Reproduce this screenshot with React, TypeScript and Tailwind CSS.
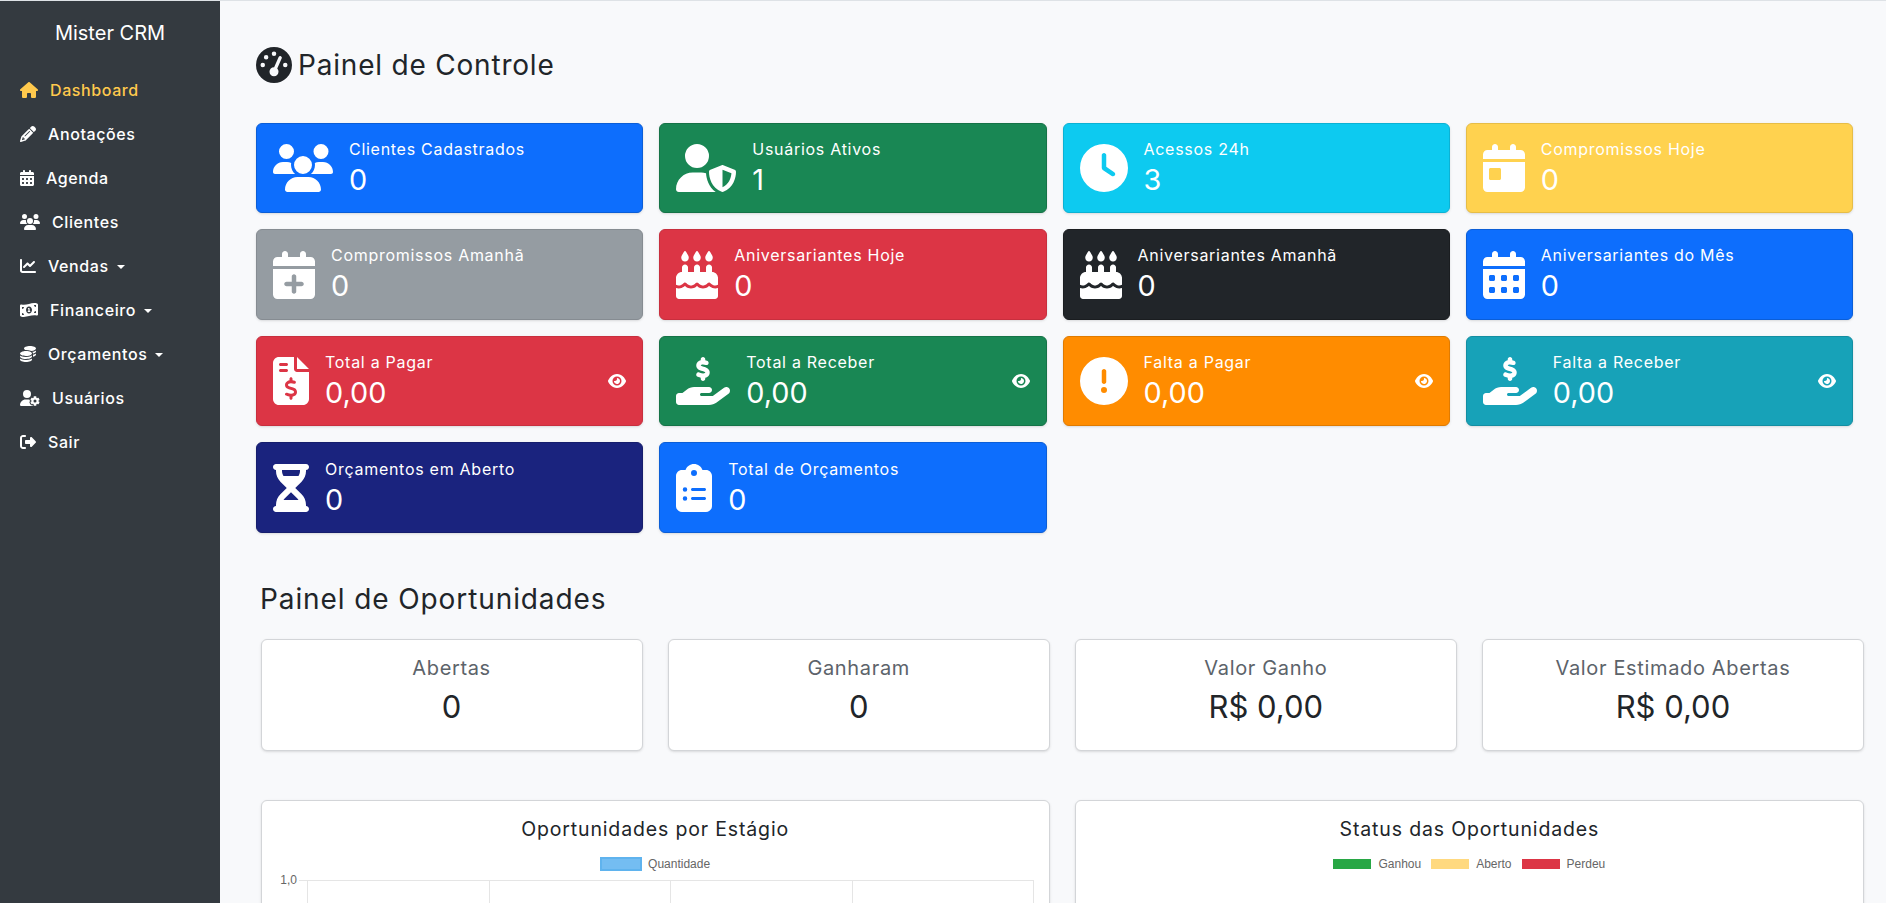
import type { ReactNode } from 'react'
import {
  FaHouse, FaPencil, FaCalendarDays, FaUsers, FaChartLine, FaMoneyBill1Wave, FaCoins, FaUserGear, FaRightFromBracket,
  FaGaugeHigh, FaUserShield, FaClock, FaCalendarDay, FaCalendarPlus, FaCakeCandles, FaFileInvoiceDollar,
  FaHandHoldingDollar, FaCircleExclamation, FaHourglassHalf, FaClipboardList, FaEye,
} from 'react-icons/fa6'

const MENU = [
  { label: 'Dashboard', icon: FaHouse, width: 'w-[18px]', active: true },
  { label: 'Anotações', icon: FaPencil, width: 'w-4' },
  { label: 'Agenda', icon: FaCalendarDays, width: 'w-[14px]' },
  { label: 'Clientes', icon: FaUsers, width: 'w-5' },
  { label: 'Vendas', icon: FaChartLine, width: 'w-4', caret: true },
  { label: 'Financeiro', icon: FaMoneyBill1Wave, width: 'w-[18px]', caret: true },
  { label: 'Orçamentos', icon: FaCoins, width: 'w-4', caret: true },
  { label: 'Usuários', icon: FaUserGear, width: 'w-5' },
  { label: 'Sair', icon: FaRightFromBracket, width: 'w-4' },
]

const STATS = [
  { title: 'Clientes Cadastrados', value: '0', icon: FaUsers, width: 'w-[60px]', color: 'bg-[#0d6efd] border-[#0b5ed7]' },
  { title: 'Usuários Ativos', value: '1', icon: FaUserShield, width: 'w-[60px]', color: 'bg-[#198754] border-[#157347]' },
  { title: 'Acessos 24h', value: '3', icon: FaClock, width: 'w-12', color: 'bg-[#0dcaf0] border-[#0bb2d4]' },
  { title: 'Compromissos Hoje', value: '0', icon: FaCalendarDay, width: 'w-[42px]', color: 'bg-[#ffd24f] border-[#e6bd47]' },
  { title: 'Compromissos Amanhã', value: '0', icon: FaCalendarPlus, width: 'w-[42px]', color: 'bg-[#959ca2] border-[#868c92]' },
  { title: 'Aniversariantes Hoje', value: '0', icon: FaCakeCandles, width: 'w-[42px]', color: 'bg-[#dc3545] border-[#c82f3e]' },
  { title: 'Aniversariantes Amanhã', value: '0', icon: FaCakeCandles, width: 'w-[42px]', color: 'bg-[#212529] border-[#1a1d20]' },
  { title: 'Aniversariantes do Mês', value: '0', icon: FaCalendarDays, width: 'w-[42px]', color: 'bg-[#0d6efd] border-[#0b5ed7]' },
  { title: 'Total a Pagar', value: '0,00', icon: FaFileInvoiceDollar, width: 'w-9', color: 'bg-[#dc3545] border-[#c82f3e]', eye: true },
  { title: 'Total a Receber', value: '0,00', icon: FaHandHoldingDollar, width: 'w-[54px]', color: 'bg-[#198754] border-[#157347]', eye: true },
  { title: 'Falta a Pagar', value: '0,00', icon: FaCircleExclamation, width: 'w-12', color: 'bg-[#ff8c00] border-[#e07b00]', eye: true },
  { title: 'Falta a Receber', value: '0,00', icon: FaHandHoldingDollar, width: 'w-[54px]', color: 'bg-[#17a2b8] border-[#138ea2]', eye: true },
  { title: 'Orçamentos em Aberto', value: '0', icon: FaHourglassHalf, width: 'w-9', color: 'bg-[#1a237e] border-[#161e6d]' },
  { title: 'Total de Orçamentos', value: '0', icon: FaClipboardList, width: 'w-9', color: 'bg-[#0d6efd] border-[#0b5ed7]' },
]

const OPPORTUNITIES = [
  { title: 'Abertas', value: '0' },
  { title: 'Ganharam', value: '0' },
  { title: 'Valor Ganho', value: 'R$ 0,00' },
  { title: 'Valor Estimado Abertas', value: 'R$ 0,00' },
]

function ChartCard({ title, children }: { title: string; children: ReactNode }) {
  return (
    <div className="h-[200px] rounded-md border border-[#d3d5d8] bg-white shadow-sm">
      <h5 className="pt-[14px] text-center text-[19.5px] leading-[28px] tracking-[0.85px] text-[#212529]">{title}</h5>
      {children}
    </div>
  )
}

export default function App() {
  return (
    <div className="flex h-screen overflow-hidden border-t border-[#dee2e6] bg-[#f8f9fb] font-['Inter',sans-serif]">
      {/* Sidebar */}
      <aside className="w-[220px] shrink-0 bg-[#343a40] text-white">
        <div className="pt-[18px] text-center text-[20px] leading-[28px]">Mister CRM</div>
        <nav className="mt-[21px] flex flex-col">
          {MENU.map(item => (
            <a key={item.label} className={`flex h-[44px] items-center gap-3 pl-5 text-[16px] font-medium tracking-[0.6px] ${item.active ? 'text-[#ffc94d]' : 'text-white'}`}>
              <item.icon className={`h-4 shrink-0 ${item.width}`} />
              <span>{item.label}</span>
              {item.caret && <span className="ml-[-4px] mt-[2px] border-x-[4px] border-t-[4px] border-x-transparent border-t-current" />}
            </a>
          ))}
        </nav>
      </aside>

      {/* Main */}
      <main className="min-w-0 flex-1 pl-[36px] pr-[33px]">
        <h3 className="mt-[46px] flex h-[36px] items-center gap-[6px] text-[28px] tracking-[0.8px] text-[#212529]">
          <FaGaugeHigh className="h-[36px] w-[36px]" />
          Painel de Controle
        </h3>

        <div className="mt-[39.7px] grid grid-cols-4 gap-4">
          {STATS.map(stat => (
            <div key={stat.title} className={`flex h-[90.6px] items-center gap-4 rounded-md border px-[16px] text-white shadow-sm ${stat.color}`}>
              <stat.icon className={`h-12 shrink-0 ${stat.width}`} />
              <div className="min-w-0 flex-1">
                <div className="mb-[4px] text-[16px] leading-[20px] tracking-[0.72px]">{stat.title}</div>
                <div className="text-[28.8px] leading-[34.5px]">{stat.value}</div>
              </div>
              {stat.eye && <FaEye className="h-4 w-[18px] shrink-0" />}
            </div>
          ))}
        </div>

        <div className="ml-[4.5px] mr-[-11px]">
          <h3 className="ml-[-0.5px] mt-[42.4px] text-[28px] leading-[48px] tracking-[0.9px] text-[#212529]">Painel de Oportunidades</h3>
          <div className="mt-[16px] grid grid-cols-4 gap-[25px]">
            {OPPORTUNITIES.map(o => (
              <div key={o.title} className="h-[112px] rounded-md border border-[#d3d5d8] bg-white pt-[16px] text-center shadow-sm">
                <div className="text-[20px] leading-[24px] tracking-[0.65px] text-[#5c636a]">{o.title}</div>
                <div className="mt-[8px] text-[31px] leading-[38px] text-[#212529]">{o.value}</div>
              </div>
            ))}
          </div>

          <div className="mt-[49px] grid grid-cols-2 gap-[25px]">
            <ChartCard title="Oportunidades por Estágio">
              <div className="mt-[14px] flex items-center justify-center gap-[6px] font-['Liberation_Sans',sans-serif] text-[12px] leading-[14px] text-[#666]">
                <span className="h-[14px] w-[42px] border-2 border-[#5fb3ee] bg-[#74bdf2]" />
                Quantidade
              </div>
              <svg className="mt-[-2px] block" width="788" height="70">
                <text x="35" y="15" textAnchor="end" fontSize="12" fill="#666" fontFamily="Liberation Sans">1,0</text>
                <line x1="37" y1="11.5" x2="771" y2="11.5" stroke="#e5e5e5" />
                {[45, 227, 408, 590, 771].map(x => (
                  <line key={x} x1={x + 0.5} y1="11" x2={x + 0.5} y2="70" stroke="#e5e5e5" />
                ))}
              </svg>
            </ChartCard>
            <ChartCard title="Status das Oportunidades">
              <div className="mt-[14px] flex items-center justify-center font-['Liberation_Sans',sans-serif] text-[12px] leading-[14px] text-[#666]">
                <span className="h-[10px] w-[38px] bg-[#28a745]" />
                <span className="ml-[7px]">Ganhou</span>
                <span className="ml-[10px] h-[10px] w-[38px] bg-[#ffd97f]" />
                <span className="ml-[7px]">Aberto</span>
                <span className="ml-[10px] h-[10px] w-[38px] bg-[#dc3545]" />
                <span className="ml-[7px]">Perdeu</span>
              </div>
            </ChartCard>
          </div>
        </div>
      </main>
    </div>
  )
}
